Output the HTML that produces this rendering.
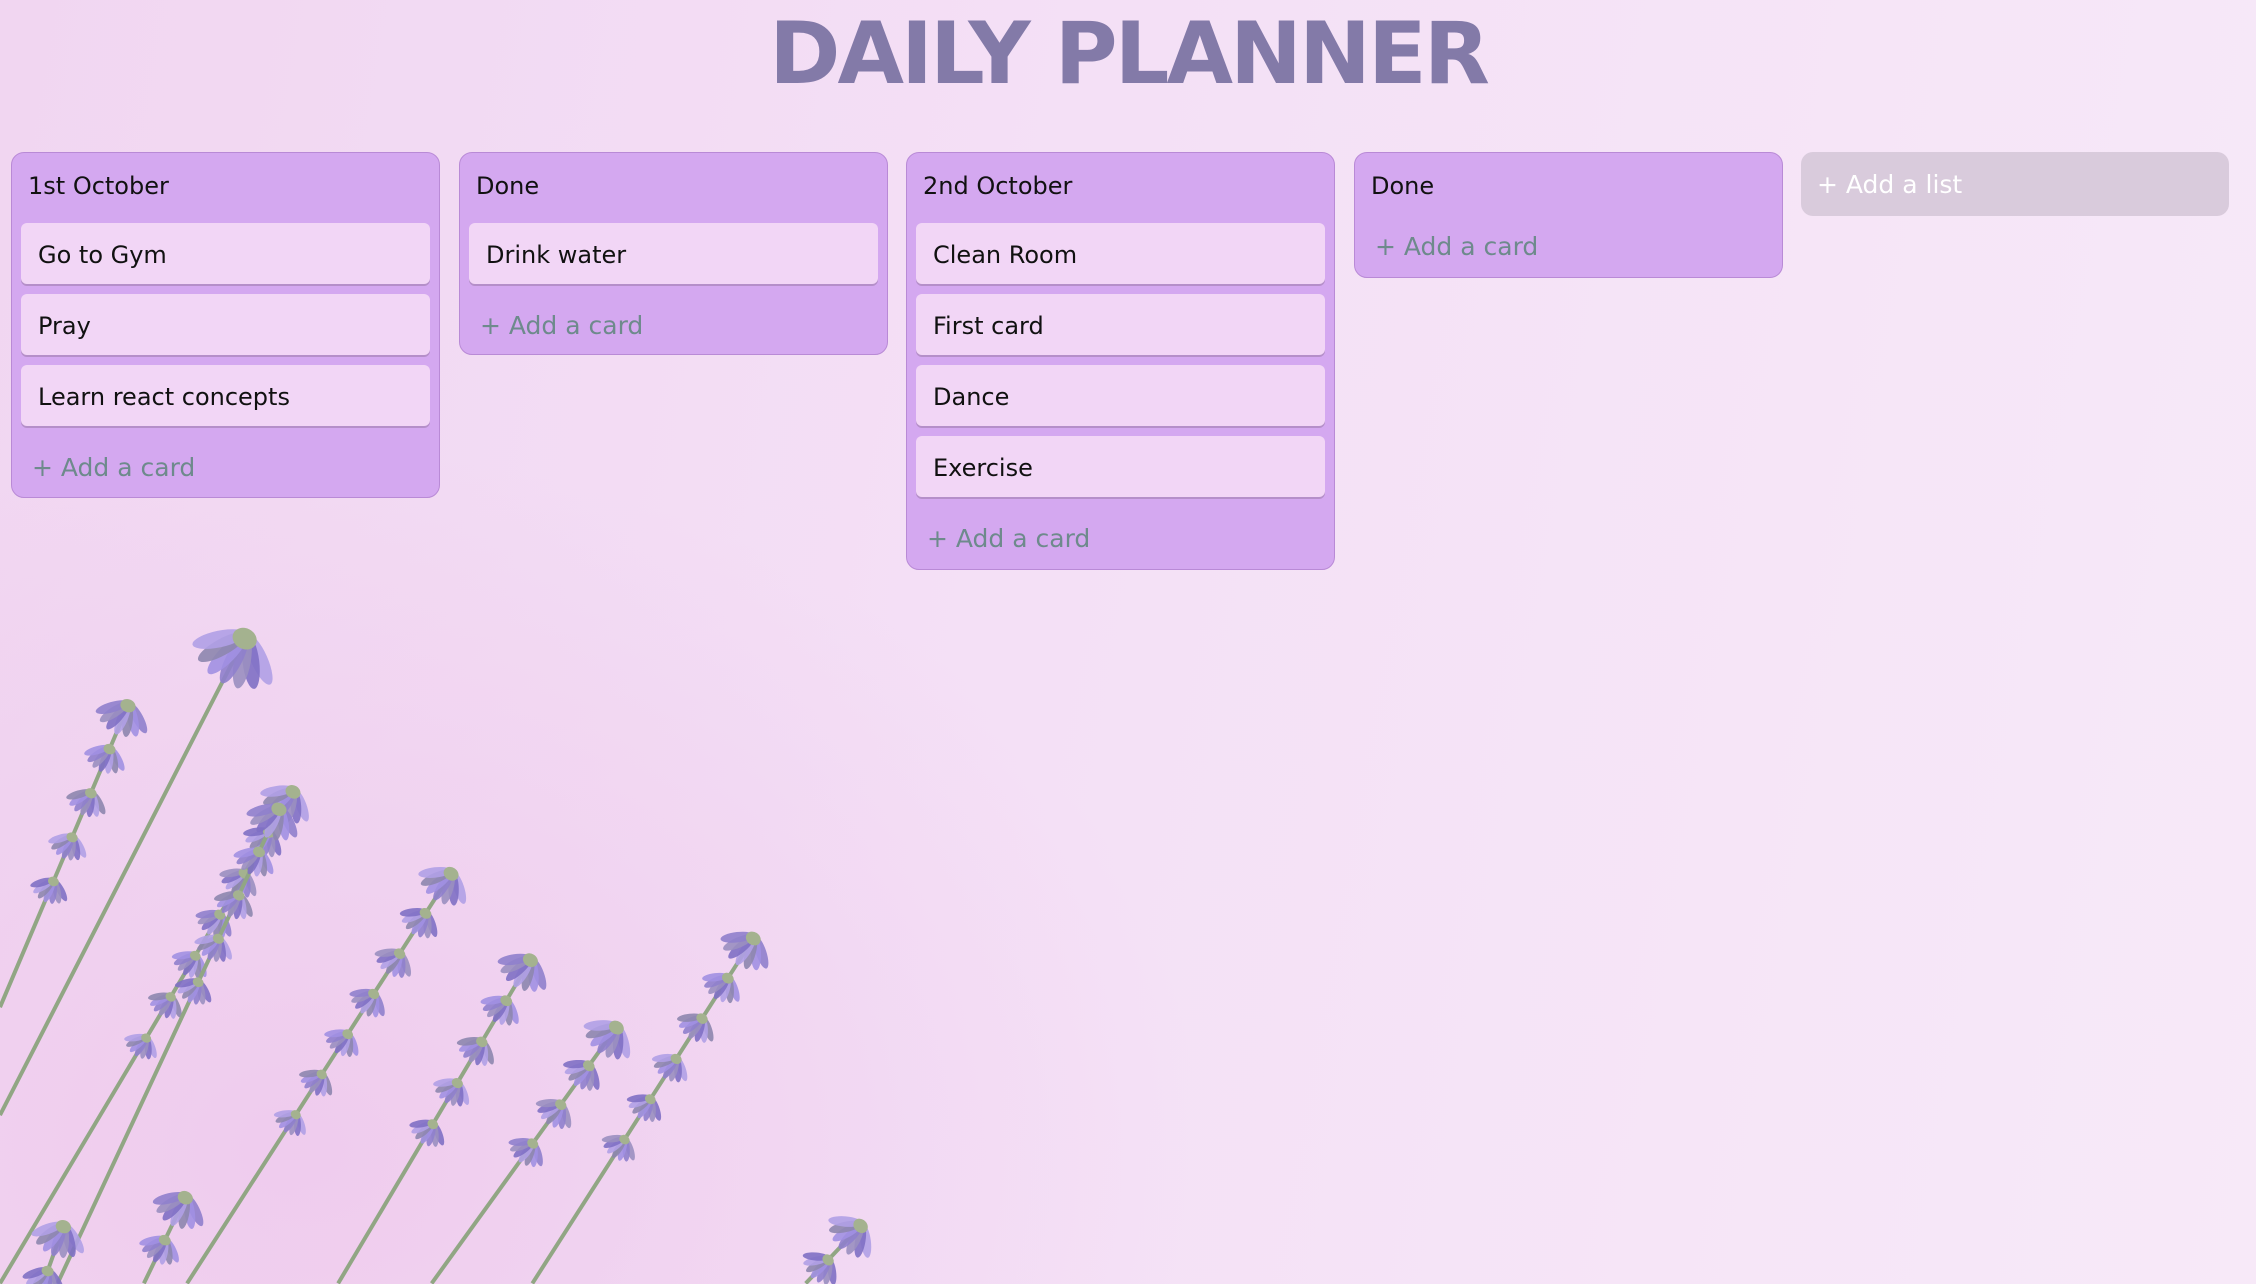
<!DOCTYPE html>
<html><head><meta charset="utf-8">
<style>
html,body{margin:0;padding:0;}
body{width:2256px;height:1284px;overflow:hidden;position:relative;
background:radial-gradient(ellipse 900px 700px at 300px 1150px,rgba(238,200,236,0.8),rgba(238,200,236,0) 100%),linear-gradient(100deg,#f1d6f1 0%,#f4e0f6 45%,#f7e9f8 100%);
font-family:"DejaVu Sans","Liberation Sans",sans-serif;}
#bg{position:absolute;left:0;top:0;display:block;}
h1{position:absolute;left:0;width:2256px;top:4px;margin:0;text-align:center;font-size:86px;font-weight:bold;color:#837aa8;letter-spacing:-3px;line-height:100px;}
.list{position:absolute;top:152px;width:429px;background:#d4a8f0;border:1.5px solid #b98ad6;border-radius:13px;box-sizing:border-box;}
.hd{position:absolute;left:16px;top:19px;font-size:24px;color:#111;}
.card{position:absolute;left:9px;width:409px;height:61px;background:#f2d6f6;border-radius:6px;box-shadow:0 2px 0 #b58fc9;box-sizing:border-box;padding-left:17px;line-height:64px;font-size:24px;color:#111;}
.add{position:absolute;left:20px;font-size:25px;color:#6e8a8c;}
.addlist{position:absolute;left:1801px;top:152px;width:428px;height:64px;background:#d9cbdc;border-radius:12px;color:#fff;font-size:25px;line-height:66px;padding-left:16px;box-sizing:border-box;}
</style></head><body>
<svg id="bg" width="2256" height="1284" viewBox="0 0 2256 1284"><g id="fl"></g></svg>
<h1>DAILY PLANNER</h1>

<div class="list" style="left:11px;height:346px;">
  <div class="hd">1st October</div>
  <div class="card" style="top:70px">Go to Gym</div>
  <div class="card" style="top:141px">Pray</div>
  <div class="card" style="top:212px">Learn react concepts</div>
  <div class="add" style="top:300px">+ Add a card</div>
</div>
<div class="list" style="left:459px;height:203px;">
  <div class="hd">Done</div>
  <div class="card" style="top:70px">Drink water</div>
  <div class="add" style="top:158px">+ Add a card</div>
</div>
<div class="list" style="left:906px;height:418px;">
  <div class="hd">2nd October</div>
  <div class="card" style="top:70px">Clean Room</div>
  <div class="card" style="top:141px">First card</div>
  <div class="card" style="top:212px">Dance</div>
  <div class="card" style="top:283px">Exercise</div>
  <div class="add" style="top:371px">+ Add a card</div>
</div>
<div class="list" style="left:1354px;height:126px;">
  <div class="hd">Done</div>
  <div class="add" style="top:79px">+ Add a card</div>
</div>
<div class="addlist">+ Add a list</div>

<script>
(function(){
var g=document.getElementById('fl'),h='',S=1.4388;
var stems=[[172,440,0,775,1],[90,488,0,700,5],[205,548,0,892,7],[195,560,40,892,5],[315,605,130,892,7],[370,665,235,892,5],[430,712,300,892,4],[525,650,370,892,6],[600,850,560,892,2],[130,830,100,892,2],[45,850,30,892,2]];
var cols=['#8f80cc','#a190e2','#8d86ae','#b0a0e6','#7f70c4','#9a8fc0'];
stems.forEach(function(s,i){
  var x0=s[0]*S,y0=s[1]*S,x1=s[2]*S,y1=s[3]*S;
  h+='<line x1="'+x0+'" y1="'+y0+'" x2="'+x1+'" y2="'+y1+'" stroke="#91a684" stroke-width="4"/>';
  var dx=x1-x0,dy=y1-y0,L=Math.sqrt(dx*dx+dy*dy),ang=Math.atan2(-dx,dy)*180/Math.PI;
  for(var k=0;k<s[4];k++){
    var t=(k*48)/L,x=x0+dx*t,y=y0+dy*t,sc=(k==0?1.3:1.05-k*0.03)*(s[4]==1?1.6:1);
    h+='<g transform="translate('+x.toFixed(1)+','+y.toFixed(1)+') rotate('+(ang+180).toFixed(1)+') scale('+sc.toFixed(2)+')">';
    for(var j=-3;j<=3;j++){
      var c=cols[(i*3+j+k+12)%6];
      h+='<ellipse cx="0" cy="-14" rx="4" ry="13" fill="'+c+'" opacity="0.9" transform="rotate('+(j*17)+')"/>';
    }
    h+='<ellipse cx="0" cy="-3" rx="6" ry="5" fill="#a4b28f"/></g>';
  }
});
g.innerHTML=h;
})();
</script>
</body></html>
